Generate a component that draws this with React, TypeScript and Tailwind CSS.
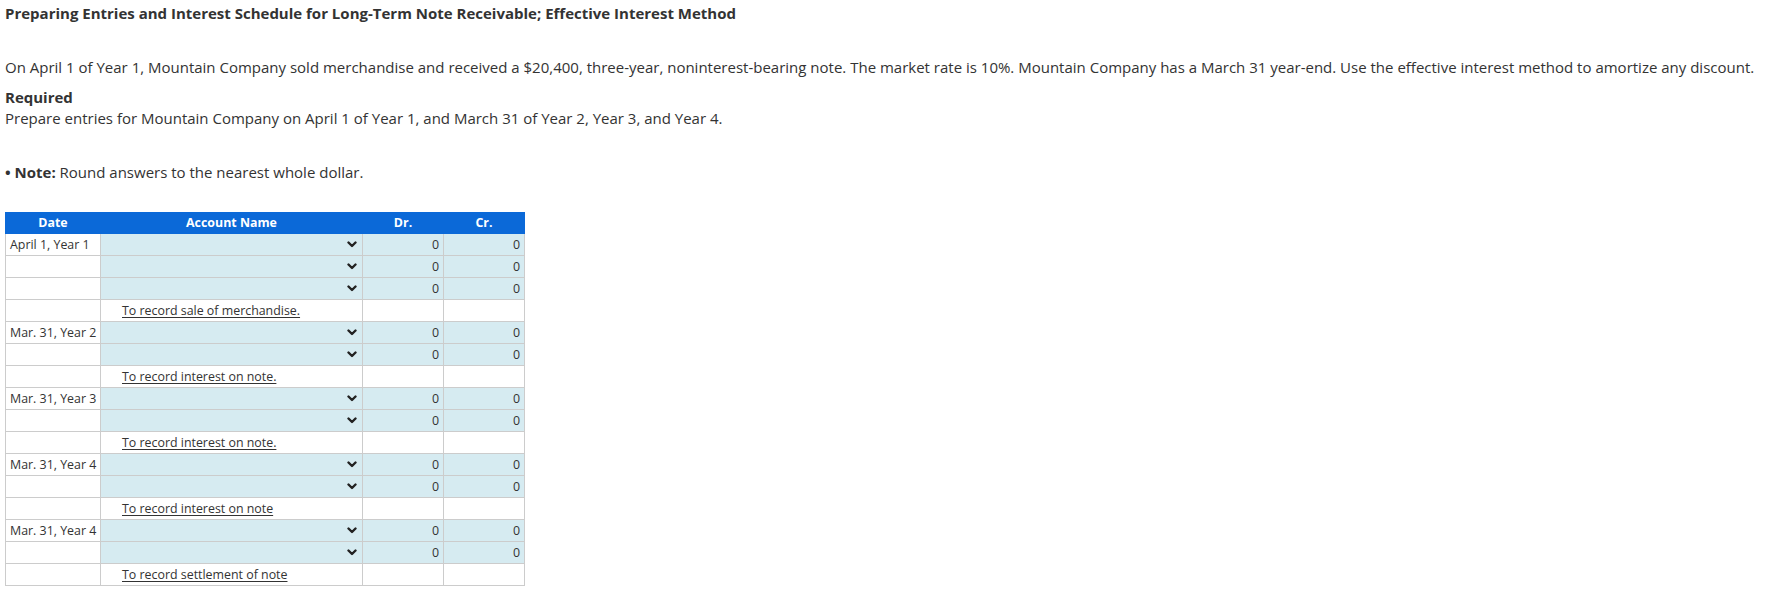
const rows: { date: string; kind: "entry" | "memo"; memo?: string }[] = [
  { date: "April 1, Year 1", kind: "entry" },
  { date: "", kind: "entry" },
  { date: "", kind: "entry" },
  { date: "", kind: "memo", memo: "To record sale of merchandise." },
  { date: "Mar. 31, Year 2", kind: "entry" },
  { date: "", kind: "entry" },
  { date: "", kind: "memo", memo: "To record interest on note." },
  { date: "Mar. 31, Year 3", kind: "entry" },
  { date: "", kind: "entry" },
  { date: "", kind: "memo", memo: "To record interest on note." },
  { date: "Mar. 31, Year 4", kind: "entry" },
  { date: "", kind: "entry" },
  { date: "", kind: "memo", memo: "To record interest on note" },
  { date: "Mar. 31, Year 4", kind: "entry" },
  { date: "", kind: "entry" },
  { date: "", kind: "memo", memo: "To record settlement of note" },
];

const Chevron = () => (
  <svg width="10" height="7" viewBox="0 0 10 7" className="shrink-0">
    <path d="M1.5 1.5 L5 5 L8.5 1.5" fill="none" stroke="#222" strokeWidth="2.4" strokeLinecap="round" strokeLinejoin="round" />
  </svg>
);

export default function App() {
  return (
    <div className="min-h-[594px] bg-white pl-[5px] pt-[3px] text-[#333] font-['Open_Sans',sans-serif]">
      <h1 className="text-[15px] font-bold leading-[21px]">
        Preparing Entries and Interest Schedule for Long-Term Note Receivable; Effective Interest Method
      </h1>

      <p className="mt-[33px] text-[15px] leading-[21px]">
        On April 1 of Year 1, Mountain Company sold merchandise and received a $20,400, three-year, noninterest-bearing note. The market rate is 10%. Mountain Company has a March 31 year-end. Use the effective interest method to amortize any discount.
      </p>
      <p className="mt-[9px] text-[15px] font-bold leading-[21px]">Required</p>
      <p className="text-[15px] leading-[21px]">
        Prepare entries for Mountain Company on April 1 of Year 1, and March 31 of Year 2, Year 3, and Year 4.
      </p>

      <p className="mt-[33px] text-[15px] leading-[21px]">
        <span className="font-bold">• Note:</span> Round answers to the nearest whole dollar.
      </p>

      <table className="mt-[29px] w-[519px] border-collapse table-fixed text-[12.4px]">
        <colgroup>
          <col className="w-[95px]" />
          <col className="w-[262px]" />
          <col className="w-[81px]" />
          <col className="w-[81px]" />
        </colgroup>
        <thead>
          <tr className="h-[21px] bg-[#0b69d8] text-white">
            <th className="border border-[#0b69d8] p-0 font-bold">Date</th>
            <th className="border border-[#0b69d8] p-0 font-bold">Account Name</th>
            <th className="border border-[#0b69d8] p-0 font-bold">Dr.</th>
            <th className="border border-[#0b69d8] p-0 font-bold">Cr.</th>
          </tr>
        </thead>
        <tbody>
          {rows.map((r, i) => (
            <tr key={i} className="h-[22px]">
              <td className="border border-[#cccccc] px-[4px] py-0 whitespace-nowrap leading-[20px]">{r.date}</td>
              {r.kind === "entry" ? (
                <>
                  <td className="border border-[#cccccc] bg-[#d6ebf1] p-0">
                    <div className="flex justify-end pr-[5px]">
                      <Chevron />
                    </div>
                  </td>
                  <td className="border border-[#cccccc] bg-[#d6ebf1] px-[4px] py-0 text-right leading-[20px]">0</td>
                  <td className="border border-[#cccccc] bg-[#d6ebf1] px-[4px] py-0 text-right leading-[20px]">0</td>
                </>
              ) : (
                <>
                  <td className="border border-[#cccccc] py-0 pl-[21px] leading-[20px]">
                    <span className="underline underline-offset-2">{r.memo}</span>
                  </td>
                  <td className="border border-[#cccccc] p-0" />
                  <td className="border border-[#cccccc] p-0" />
                </>
              )}
            </tr>
          ))}
        </tbody>
      </table>
    </div>
  );
}
